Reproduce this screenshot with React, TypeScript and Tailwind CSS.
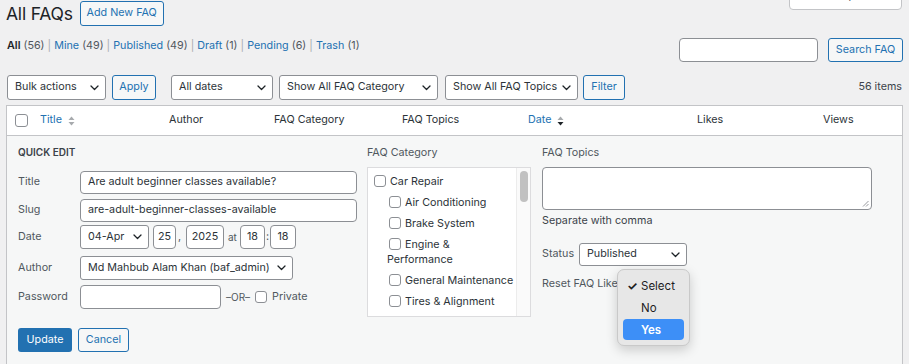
const Chevron = () => (
  <svg width="9" height="6" viewBox="0 0 9 6" fill="none" className="ml-[3px] shrink-0">
    <path d="M1 1l3.5 3.5L8 1" stroke="#1d2327" strokeWidth="1.3" strokeLinecap="round" strokeLinejoin="round" />
  </svg>
);

const Sort = ({ down }: { down?: boolean }) => (
  <svg width="7" height="10" viewBox="0 0 7 10" className="ml-[6px]">
    <path d="M0.5 4L3.5 0.5L6.5 4z" fill="#a7aaad" />
    <path d="M0.5 6L3.5 9.5L6.5 6z" fill={down ? "#1d2327" : "#a7aaad"} />
  </svg>
);

const Select = ({ label, className }: { label: string; className: string }) => (
  <div className={"flex items-center justify-between rounded-[3px] border border-[#8c8f94] bg-white pl-[7px] pr-[6px] text-[#2c3338] " + className}>
    <span className="whitespace-nowrap">{label}</span>
    <Chevron />
  </div>
);

const Btn = ({ label, className }: { label: string; className: string }) => (
  <div className={"flex items-center justify-center rounded-[3px] border border-[#2271b1] bg-[#f6f7f7] text-[#2271b1] " + className}>
    {label}
  </div>
);

const Box = ({ className }: { className?: string }) => (
  <span className={"inline-block h-[12px] w-[12px] rounded-[3px] border border-[#8c8f94] bg-white align-[-2px] " + (className ?? "")} />
);

const Field = ({ label, children, className }: { label: string; children: React.ReactNode; className: string }) => (
  <div className={"flex items-center " + className}>
    <span className="w-[62px] text-[#50575e]">{label}</span>
    {children}
  </div>
);

const children = ["Air Conditioning", "Brake System", "Engine &|Performance", "General Maintenance", "Tires & Alignment"];

export default function App() {
  return (
    <div className="h-[364px] w-[909px] overflow-hidden bg-[#f0f0f1] font-['Inter','Liberation_Sans',sans-serif] text-[10.75px] text-[#1d2327]">
      {/* heading */}
      <div className="flex h-[26px] items-center pl-[6px] pr-[7px] pt-[1px]">
        <h1 className="text-[17.5px] leading-[25px] tracking-[-0.2px] text-[#1d2327]">All FAQs</h1>
        <Btn label="Add New FAQ" className="ml-[7px] h-[25px] w-[84px]" />
        <div className="-mt-[17px] ml-auto flex h-[26px] w-[113px] items-end justify-center self-start rounded-b-[4px] border border-[#c3c4c7] bg-white pb-[6px] pr-[10px] leading-[14px] text-[#50575e]">
          Screen Options
        </div>
      </div>

      {/* views + search */}
      <div className="mt-[12px] flex items-start justify-between pl-[7px] pr-[6px]">
        <div className="leading-[16px] text-[#a7aaad]">
          <span className="font-semibold text-[#1d2327]">All</span> <span className="text-[#50575e]">(56)</span> |{" "}
          <span className="text-[#2271b1]">Mine</span> <span className="text-[#50575e]">(49)</span> |{" "}
          <span className="text-[#2271b1]">Published</span> <span className="text-[#50575e]">(49)</span> |{" "}
          <span className="text-[#2271b1]">Draft</span> <span className="text-[#50575e]">(1)</span> |{" "}
          <span className="text-[#2271b1]">Pending</span> <span className="text-[#50575e]">(6)</span> |{" "}
          <span className="text-[#2271b1]">Trash</span> <span className="text-[#50575e]">(1)</span>
        </div>
        <div className="flex gap-[10px]">
          <div className="h-[24px] w-[139px] rounded-[4px] border border-[#8c8f94] bg-white" />
          <Btn label="Search FAQ" className="h-[24px] w-[75px]" />
        </div>
      </div>

      {/* toolbar */}
      <div className="mt-[13px] flex h-[25px] items-stretch pl-[7px] pr-[7px]">
        <Select label="Bulk actions" className="w-[99px]" />
        <Btn label="Apply" className="ml-[6px] w-[44px]" />
        <Select label="All dates" className="ml-[15px] w-[102px]" />
        <Select label="Show All FAQ Category" className="ml-[6px] w-[159px]" />
        <Select label="Show All FAQ Topics" className="ml-[7px] w-[133px]" />
        <Btn label="Filter" className="ml-[5px] w-[42px]" />
        <span className="ml-auto self-center text-[#3c434a]">56 items</span>
      </div>

      {/* table */}
      <div className="ml-[6px] mt-[5px] w-[897px] border border-[#c3c4c7]">
        <div className="flex h-[30px] items-center border-b border-[#c3c4c7] bg-white text-[#2c3338]">
          <div className="flex w-[25px] pl-[8px]">
            <span className="h-[13px] w-[13px] rounded-[3px] border border-[#8c8f94] bg-white" />
          </div>
          <div className="flex w-[129px] items-center pl-[8px] text-[#2271b1]">
            Title <Sort />
          </div>
          <div className="w-[105px] pl-[8px]">Author</div>
          <div className="w-[128px] pl-[8px]">FAQ Category</div>
          <div className="w-[126px] pl-[8px]">FAQ Topics</div>
          <div className="flex w-[169px] items-center pl-[8px] text-[#2271b1]">
            Date <Sort down />
          </div>
          <div className="w-[126px] pl-[8px]">Likes</div>
          <div className="flex-1 pl-[8px]">Views</div>
        </div>

        {/* quick edit */}
        <div className="flex h-[260px] bg-[#f6f7f7] pl-[11px] pt-[9px] text-[#2c3338]">
          <div className="w-[349px]">
            <div className="text-[10px] font-semibold uppercase leading-[14px] text-[#3c434a]">Quick Edit</div>
            <Field label="Title" className="mt-[12px] h-[23px]">
              <div className="flex h-full w-[277px] items-center rounded-[4px] border border-[#8c8f94] bg-white px-[7px]">
                Are adult beginner classes available?
              </div>
            </Field>
            <Field label="Slug" className="mt-[5px] h-[23px]">
              <div className="flex h-full w-[277px] items-center rounded-[4px] border border-[#8c8f94] bg-white px-[7px]">
                are-adult-beginner-classes-available
              </div>
            </Field>
            <Field label="Date" className="mt-[3px] h-[24px]">
              <Select label="04-Apr" className="h-full w-[69px]" />
              <div className="ml-[4px] flex h-full w-[23px] items-center justify-center rounded-[4px] border border-[#8c8f94] bg-white">25</div>
              <span className="w-[10px] pl-[2px] text-[#50575e]">,</span>
              <div className="flex h-full w-[38px] items-center justify-center rounded-[4px] border border-[#8c8f94] bg-white">2025</div>
              <span className="w-[16px] pl-[4px] text-[10px] text-[#50575e]">at</span>
              <div className="flex h-full w-[25px] items-center justify-center rounded-[4px] border border-[#8c8f94] bg-white">18</div>
              <span className="w-[5px] pl-[1px] text-[#50575e]">:</span>
              <div className="flex h-full w-[26px] items-center justify-center rounded-[4px] border border-[#8c8f94] bg-white">18</div>
            </Field>
            <Field label="Author" className="mt-[7px] h-[24px]">
              <Select label="Md Mahbub Alam Khan (baf_admin)" className="h-full w-[213px]" />
            </Field>
            <Field label="Password" className="mt-[5px] h-[24px]">
              <div className="h-full w-[141px] rounded-[4px] border border-[#8c8f94] bg-white" />
              <span className="ml-[5px] text-[10px] text-[#50575e]">–OR–</span>
              <Box className="ml-[5px]" />
              <span className="ml-[5px] text-[#50575e]">Private</span>
            </Field>
            <div className="mt-[19px] flex h-[24px]">
              <div className="flex w-[54px] items-center justify-center rounded-[3px] bg-[#2271b1] text-white">Update</div>
              <Btn label="Cancel" className="ml-[6px] w-[51px]" />
            </div>
          </div>

          {/* category */}
          <div className="w-[164px]">
            <div className="mt-[1px] leading-[14px] text-[#50575e]">FAQ Category</div>
            <div className="mt-[7px] flex h-[150px] overflow-hidden border border-[#dcdcde] bg-white">
              <ul className="flex-1 pl-[6px] pt-[6px] leading-[15px]">
                <li>
                  <Box />
                  <span className="ml-[4px]">Car Repair</span>
                  <ul className="mt-[6px] pl-[13px]">
                    {children.map((c) => (
                      <li key={c} className="mb-[6px]">
                        <Box className="ml-[2px]" />
                        <span className="ml-[4px]">
                          {c.includes("|") ? (
                            <>
                              {c.split("|")[0]}
                              <br />
                              {c.split("|")[1]}
                            </>
                          ) : (
                            c
                          )}
                        </span>
                      </li>
                    ))}
                  </ul>
                </li>
                <li>
                  <Box />
                </li>
              </ul>
              <div className="w-[14px] border-l border-[#ececec] bg-[#fafafa] pt-[3px]">
                <div className="mx-auto h-[31px] w-[8px] rounded-full bg-[#c1c1c1]" />
              </div>
            </div>
          </div>

          {/* topics */}
          <div className="ml-[11px] w-[330px]">
            <div className="mt-[1px] leading-[14px] text-[#50575e]">FAQ Topics</div>
            <div className="relative mt-[7px] h-[43px] rounded-[4px] border border-[#8c8f94] bg-white">
              <svg width="7" height="7" viewBox="0 0 7 7" className="absolute bottom-[2px] right-[2px]">
                <path d="M6.5 1L1 6.5M6.5 4L4 6.5" stroke="#8c8f94" strokeWidth="0.9" />
              </svg>
            </div>
            <div className="mt-[4px] leading-[14px] text-[#3c434a]">Separate with comma</div>
            <div className="mt-[15px] flex h-[23px] items-center">
              <span className="w-[37px] text-[#50575e]">Status</span>
              <Select label="Published" className="h-full w-[108px]" />
            </div>
            <div className="relative mt-[11px] leading-[14px] text-[#50575e]">
              Reset FAQ Likes
              <div className="absolute left-[75px] top-[-8px] h-[77px] w-[73px] rounded-[7px] border border-[#c9c9c9] bg-[#e7e7e7] px-[5px] pt-[5px] text-[11.5px] text-[#1d1d1f] shadow-[0_4px_12px_rgba(0,0,0,0.18)]">
                <div className="flex h-[22px] items-center">
                  <span className="w-[18px] pl-[4px] text-[12px] font-bold leading-none">✓</span>
                  <span>Select</span>
                </div>
                <div className="flex h-[22px] items-center pl-[18px]">No</div>
                <div className="flex h-[21px] items-center rounded-[4px] bg-[#3d8ff7] pl-[18px] font-semibold text-white">Yes</div>
              </div>
            </div>
          </div>
        </div>
      </div>
    </div>
  );
}
